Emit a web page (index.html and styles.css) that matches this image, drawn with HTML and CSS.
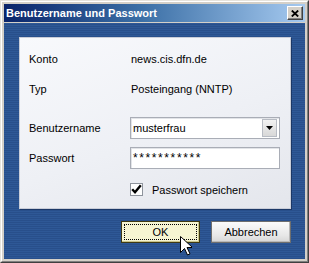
FILE: index.html
```html
<!DOCTYPE html>
<html>
<head>
  <title>Benutzername und Passwort</title>
  <link rel="stylesheet" href="styles.css">
</head>
<body>
<div class="window">
<div class="frame">

<div class="titlebar">
  <span class="title">Benutzername und Passwort</span>
  <span class="close"><svg width="8" height="7" viewBox="0 0 8 7"><path d="M0.8 0.5l6.4 6M7.2 0.5l-6.4 6" stroke="#000" stroke-width="1.8" fill="none"/></svg></span>
</div>

<div class="client">
  <div class="panel">
    <div class="row"><div class="label">Konto</div><div class="value">news.cis.dfn.de</div></div>
    <div class="row"><div class="label">Typ</div><div class="value">Posteingang (NNTP)</div></div>
    <div class="row spaced">
      <div class="label">Benutzername</div>
      <div class="field combo">
        <span class="text">musterfrau</span>
        <span class="drop"><svg width="7" height="4" viewBox="0 0 7 4"><path d="M0 0h7L3.5 4z" fill="#000"/></svg></span>
      </div>
    </div>
    <div class="row"><div class="label">Passwort</div><div class="field"><span class="text pass">***********</span></div></div>
    <div class="row check">
      <div class="label"></div>
      <div class="checkline">
        <span class="box"><svg width="11" height="11" viewBox="0 0 11 11"><path d="M1.2 5.2l2.8 3 5.8-7" stroke="#000" stroke-width="2.4" fill="none"/></svg></span>
        <span>Passwort speichern</span>
      </div>
    </div>
  </div>

  <div class="buttons">
    <div class="btn ok"><span class="focus">OK</span></div>
    <div class="btn">Abbrechen</div>
  </div>

  <svg class="cursor" width="12" height="20" viewBox="0 0 12 20"><path d="M0.5 0.5v16l4-4 3 6.5 2.5-1.2-3-6.3h5.5z" fill="#fff" stroke="#000" stroke-width="1"/></svg>
</div>

</div>
</div>
</body>
</html>
```
FILE: styles.css
```css
body { margin:0px; padding:0px; font-family:"Liberation Sans", Arial, sans-serif; font-size:11px; color:#000; }

/* окно */
.window { width:309px; height:263px; box-sizing:border-box;
  border:1px solid; border-color:#e6e3dc #404040 #404040 #e6e3dc; background:#d4d0c8; }
.frame { height:100%; box-sizing:border-box; border:1px solid; border-color:#ffffff #808080 #808080 #ffffff;
  padding:2px 2px 2px 2px; display:flex; flex-direction:column; }

.titlebar { height:18px; display:flex; align-items:center; justify-content:space-between;
  background:linear-gradient(to right, #0a246a, #3a6ea5 45%, #a6caf0); padding:0 2px 0 2px; }
.title { color:#fff; font-weight:bold; font-size:11px; }
.close { width:16px; height:14px; box-sizing:border-box; background:#d4d0c8;
  border:1px solid; border-color:#fff #404040 #404040 #fff; box-shadow:inset -1px -1px 0 #808080;
  display:flex; align-items:center; justify-content:center; }

.client { margin-top:1px; flex:1; position:relative;
  background:repeating-linear-gradient(to bottom, #2e5896 0px, #2e5896 1px, #284f8b 1px, #284f8b 2px);
  padding:14px 14px 0 15px; }

/* белая панель */
.panel { height:172px; box-sizing:border-box; border:1px solid #c9cdd8;
  background:linear-gradient(160deg, #f8f9fc 0%, #eef0f5 55%, #e4e6ec 100%);
  box-shadow:1px 1px 0 #1c3867; padding:10px 0 0 9px; }
.row { display:flex; align-items:center; height:22px; }
.row + .row { margin-top:8px; }
.row.spaced { margin-top:17px; }
.row.check { margin-top:13px; height:15px; }
.label { width:101px; }
.value { padding-left:1px; }

.field { width:150px; height:22px; box-sizing:border-box; background:#fff;
  border:1px solid #a9adb6; box-shadow:inset 1px 1px 0 #e2e4e8; display:flex; align-items:center; }
.field .text { padding-left:2px; flex:1; }
.field .pass { letter-spacing:1.6px; font-size:12px; }
.drop { width:15px; height:18px; box-sizing:border-box; margin-right:2px; background:linear-gradient(#f2f2f2, #d8d8d8);
  border:1px solid #b8bcc4; display:flex; align-items:center; justify-content:center; }

.checkline { display:flex; align-items:center; }
.box { width:13px; height:13px; box-sizing:border-box; border:1px solid #8e939c; background:#fff;
  display:flex; align-items:center; justify-content:center; margin-right:9px; }

/* кнопки */
.buttons { display:flex; justify-content:flex-end; gap:11px; margin-top:12px; }
.btn { width:80px; height:22px; box-sizing:border-box; border:1px solid #6e6e6e;
  background:linear-gradient(#fbfbfb, #e6e6e6 70%, #d6d6d6); display:flex; align-items:center; justify-content:center;
  box-shadow:inset -1px -1px 0 #b8b8b8; }
.btn.ok { width:79px; border-color:#3e3a14; background:#f6f5d2; box-shadow:inset -1px -1px 0 #c9c58a; padding:2px; }
.btn.ok .focus { flex:1; align-self:stretch; border:1px dotted #000; display:flex; align-items:center; justify-content:center; }

.cursor { position:absolute; left:176px; top:213px; }
```
